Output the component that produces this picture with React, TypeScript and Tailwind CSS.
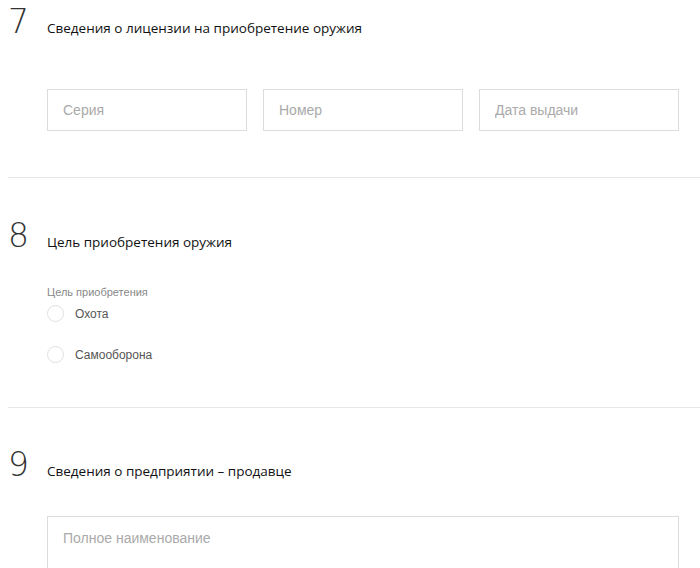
import type { ReactNode } from "react";

function SectionHead({ num, title }: { num: string; title: string }) {
  return (
    <div className="flex items-baseline">
      <span className="w-[47px] shrink-0 pl-2 text-[33px] leading-none font-extralight text-[#333] font-['DejaVu_Sans',sans-serif]">{num}</span>
      <h2 className="text-[13.5px] text-[#111] font-['Open_Sans',sans-serif]">{title}</h2>
    </div>
  );
}

function Field({ placeholder, className = "" }: { placeholder: string; className?: string }) {
  return (
    <input
      className={`border border-[#dcdcdc] bg-white px-[15px] text-[14px] text-[#333] placeholder:text-[#aaa] outline-none font-['Liberation_Sans',Arial,sans-serif] ${className}`}
      placeholder={placeholder}
    />
  );
}

function Radio({ children }: { children: ReactNode }) {
  return (
    <label className="flex h-5 items-center gap-[11px] text-[12px] text-[#555] font-['Liberation_Sans',Arial,sans-serif]">
      <span className="h-[17px] w-[17px] rounded-full border border-[#e0e0e0]" />
      {children}
    </label>
  );
}

export default function App() {
  return (
    <div className="h-[568px] w-[700px] overflow-hidden bg-white">
      <section className="pt-[5px] pb-[46px]">
        <SectionHead num="7" title="Сведения о лицензии на приобретение оружия" />
        <div className="ml-[47px] mr-[21px] mt-[51px] grid grid-cols-3 gap-4">
          <Field placeholder="Серия" className="h-[42px]" />
          <Field placeholder="Номер" className="h-[42px]" />
          <Field placeholder="Дата выдачи" className="h-[42px]" />
        </div>
      </section>
      <div className="ml-2 border-t border-[#e6e6e6]" />
      <section className="pt-[41px] pb-[42px]">
        <SectionHead num="8" title="Цель приобретения оружия" />
        <div className="ml-[47px] mt-[31px]">
          <div className="text-[11px] leading-4 text-[#888] font-['Liberation_Sans',Arial,sans-serif]">Цель приобретения</div>
          <div className="mt-[4px] flex flex-col gap-[21px]">
            <Radio>Охота</Radio>
            <Radio>Самооборона</Radio>
          </div>
        </div>
      </section>
      <div className="ml-2 border-t border-[#e6e6e6]" />
      <section className="pt-[40px]">
        <SectionHead num="9" title="Сведения о предприятии – продавце" />
        <div className="ml-[47px] mr-[21px] mt-[35px]">
          <textarea
            className="block h-[80px] w-full resize-none border border-[#dcdcdc] px-[15px] pt-[11px] text-[14px] placeholder:text-[#aaa] outline-none font-['Liberation_Sans',Arial,sans-serif]"
            placeholder="Полное наименование"
          />
        </div>
      </section>
    </div>
  );
}
